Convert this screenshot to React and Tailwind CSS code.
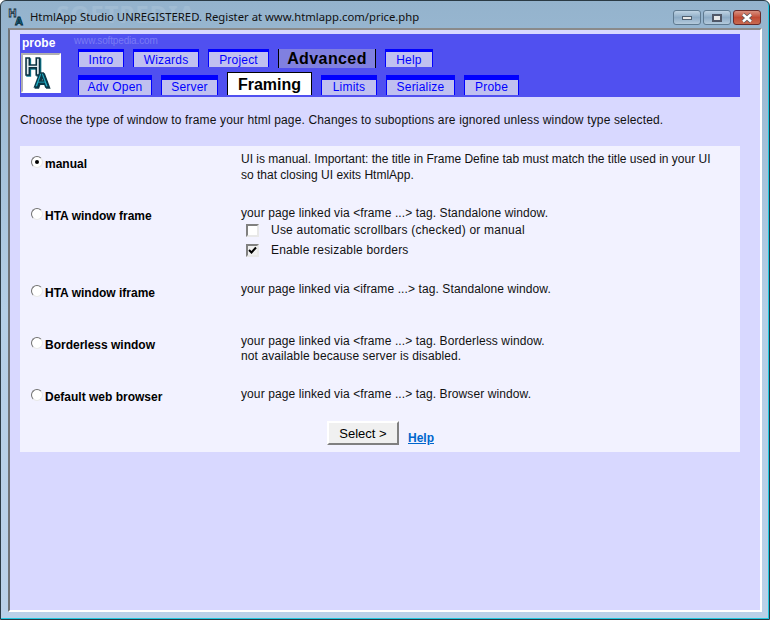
import React from 'react';

const arial = "font-['Liberation_Sans',Arial,sans-serif]";

function Tab({ label, width }) {
    return (
        <div className={`${width} h-[18px] flex items-center justify-center bg-[#c0c0f0] border-x border-t-[3px] border-b-0 border-[#0000ff] text-[12px] leading-none text-[#0000ff] tracking-[0.2px]`}>
            {label}
        </div>
    );
}

function SubTab({ label, width }) {
    return (
        <div className={`${width} h-5 flex items-center justify-center pb-[2px] bg-[#c0c0f0] border-x border-t-[5px] border-b-0 border-[#0000ff] text-[12px] leading-none text-[#0000ff] tracking-[0.2px]`}>
            {label}
        </div>
    );
}

function Radio({ checked }) {
    return (
        <span className="w-3 h-3 flex-shrink-0 rounded-full bg-white border border-t-[#707070] border-l-[#707070] border-r-[#e8e8e8] border-b-[#e8e8e8] flex items-center justify-center">
            {checked && <span className="w-1 h-1 rounded-full bg-black" />}
        </span>
    );
}

function Check({ checked }) {
    return (
        <span className={`w-[13px] h-[13px] flex-shrink-0 border-2 border-t-[#808080] border-l-[#808080] border-r-[#e8e8e8] border-b-[#e8e8e8] flex items-center justify-center ${checked ? 'bg-[#f0f0f0]' : 'bg-white'}`}>
            {checked && (
                <svg width="9" height="9" viewBox="0 0 9 9">
                    <path d="M1 4 L3.5 6.5 L8 1.5" fill="none" stroke="#000" strokeWidth="2" />
                </svg>
            )}
        </span>
    );
}

function OptionRow({ label, checked, height, textClass, children }) {
    return (
        <div className={`flex ${height}`}>
            <div className="w-[221px] flex items-start gap-[2px] pl-[11px] text-[12px] leading-[14px] font-bold text-black">
                <Radio checked={checked} />
                <span className="mt-px">{label}</span>
            </div>
            <div className={`flex-1 pr-4 text-[12px] text-[#111] ${textClass}`}>{children}</div>
        </div>
    );
}

function Logo() {
    return (
        <div className="w-10 h-10 bg-white border-2 border-t-[#b0b0b0] border-l-[#b0b0b0] border-r-white border-b-white">
            <svg width="36" height="36" viewBox="0 0 36 36" className="block">
                <g fontFamily="Liberation Sans" fontWeight="bold">
                    <text x="1.5" y="20" fontSize="23" fill="#e4ecf0" stroke="#0a3040" strokeWidth="1.6" className="[filter:drop-shadow(1.5px_1.5px_0_#0c7a90)]">H</text>
                    <text x="11" y="32" fontSize="21" fill="#20b0c8" stroke="#0a3848" strokeWidth="1.4" className="[filter:drop-shadow(1px_1px_0_#0a3848)]">A</text>
                </g>
            </svg>
        </div>
    );
}

function WinButton({ className, children }) {
    return (
        <div className={`w-7 h-[15px] rounded-[3px] border flex items-center justify-center ${className}`}>
            {children}
        </div>
    );
}

export default function App() {
    return (
        <div className={`${arial} relative w-[770px] h-[620px] overflow-hidden flex flex-col pl-[7px] pr-[7px] pb-[7px] rounded-t-md border border-[#2a3a44] shadow-[inset_-1px_-1px_0_#20c8e0] bg-gradient-to-b from-[#94b3cd] via-[#b4cfe6] to-[#bad1e9]`}>
            {/* Title bar */}
            <div className="h-[27px] flex-shrink-0 flex items-center relative">
                <span className="absolute left-[48px] top-0 font-['Noto_Sans',sans-serif] font-bold text-[24px] leading-[26px] tracking-[1px] text-white/10 whitespace-nowrap">SOFTPEDIA</span>
                <svg width="18" height="20" viewBox="0 0 18 20" className="absolute left-0 top-[6px]">
                    <g fontFamily="Liberation Sans" fontWeight="bold">
                        <text x="0.5" y="10" fontSize="11" fill="#e4ecf0" stroke="#082838" strokeWidth="0.9">H</text>
                        <text x="7" y="18" fontSize="11" fill="#20a0c8" stroke="#082838" strokeWidth="0.9">A</text>
                    </g>
                </svg>
                <span className="relative ml-[22px] mt-[6px] font-['Noto_Sans',sans-serif] text-[11.3px] text-[#101010] whitespace-nowrap">
                    HtmlApp Studio UNREGISTERED. Register at www.htmlapp.com/price.php
                </span>
                <div className="absolute right-px top-[9px] flex gap-[2px]">
                    <WinButton className="border-[#5f7a90] bg-gradient-to-b from-[#c0d4e4] via-[#8eacc6] to-[#b4cadc]">
                        <span className="w-[10px] h-1 bg-[#e8e8e8] border border-[#506070]" />
                    </WinButton>
                    <WinButton className="border-[#5f7a90] bg-gradient-to-b from-[#c0d4e4] via-[#8eacc6] to-[#b4cadc]">
                        <span className="w-[10px] h-2 bg-[#e8e8e8] border-2 border-[#505868]" />
                    </WinButton>
                    <WinButton className="border-[#6a2a28] bg-gradient-to-b from-[#d89080] via-[#c04a34] to-[#c86a50]">
                        <svg width="12" height="10" viewBox="0 0 12 10">
                            <path d="M2 1.5 L10 8.5 M10 1.5 L2 8.5" stroke="#5a5a60" strokeWidth="4" />
                            <path d="M2 1.5 L10 8.5 M10 1.5 L2 8.5" stroke="#fff" strokeWidth="2.4" />
                        </svg>
                    </WinButton>
                </div>
            </div>

            {/* Client area */}
            <div className="flex-1 min-h-0 bg-[#d8d8ff] border-2 border-t-[#8a8a8a] border-l-[#707478] border-r-white border-b-white pt-[4px] px-[10px]">
                <div className="w-[720px] h-[63px] bg-[#5050f0] flex pl-px relative">
                    <div className="w-[57px] flex-shrink-0">
                        <div className="ml-px text-[12px] font-bold text-white leading-[14px] mt-[2px]">probe</div>
                        <div className="mt-[3px]"><Logo /></div>
                    </div>
                    <div className="flex flex-col">
                        <div className="flex items-start gap-[9px] mt-[15px] h-[23px]">
                            <Tab label="Intro" width="w-[46px]" />
                            <Tab label="Wizards" width="w-[66px]" />
                            <Tab label="Project" width="w-[61px]" />
                            <div className="w-[98px] h-[19px] flex items-center justify-center bg-[#8080e0] border-x border-black text-[16px] leading-none font-bold text-black tracking-[0.4px]">
                                Advanced
                            </div>
                            <Tab label="Help" width="w-[48px]" />
                        </div>
                        <div className="flex items-end gap-[9px]">
                            <SubTab label="Adv Open" width="w-[74px]" />
                            <SubTab label="Server" width="w-[57px]" />
                            <div className="w-[85px] h-[23px] flex items-center justify-center pt-px bg-white border-x border-t border-black text-[16px] leading-none font-bold text-black">
                                Framing
                            </div>
                            <SubTab label="Limits" width="w-[56px]" />
                            <SubTab label="Serialize" width="w-[69px]" />
                            <SubTab label="Probe" width="w-[55px]" />
                        </div>
                    </div>
                    {/* softpedia mark */}
                    <span className="absolute left-[54px] top-px text-[10px] leading-[12px] text-[#7a7af5] tracking-[-0.15px]">www.softpedia.com</span>
                </div>

                <p className="mt-[16px] text-[12px] leading-[15px] text-[#111] tracking-[0.15px]">
                    Choose the type of window to frame your html page. Changes to suboptions are ignored unless window type selected.
                </p>

                <div className="mt-[18px] w-[720px] h-[306px] bg-[#f2f2ff] pt-[10px]">
                    <OptionRow label="manual" checked height="h-[52px]" textClass="-mt-[5px] leading-[16px]">
                        <p>UI is manual. Important: the title in Frame Define tab must match the title used in your UI<br />so that closing UI exits HtmlApp.</p>
                    </OptionRow>
                    <OptionRow label="HTA window frame" height="h-[77px]" textClass="-mt-[2px] leading-[15px]">
                        <p className="tracking-[0.1px]">your page linked via &lt;frame ...&gt; tag. Standalone window.</p>
                        <div className="-mt-px ml-[5px] flex items-center gap-3 h-5"><Check /><span className="tracking-[0.22px]">Use automatic scrollbars (checked) or manual</span></div>
                        <div className="ml-[5px] flex items-center gap-3 h-5"><Check checked /><span className="tracking-[0.2px]">Enable resizable borders</span></div>
                    </OptionRow>
                    <OptionRow label="HTA window iframe" height="h-[52px]" textClass="-mt-[3px] leading-[15px]">
                        <p className="tracking-[0.1px]">your page linked via &lt;iframe ...&gt; tag. Standalone window.</p>
                    </OptionRow>
                    <OptionRow label="Borderless window" height="h-[52px]" textClass="-mt-[3px] leading-[15px]">
                        <p className="tracking-[0.1px]">your page linked via &lt;frame ...&gt; tag. Borderless window.<br />not available because server is disabled.</p>
                    </OptionRow>
                    <OptionRow label="Default web browser" height="h-[32px]" textClass="-mt-[2px] leading-[15px]">
                        <p className="tracking-[0.1px]">your page linked via &lt;frame ...&gt; tag. Browser window.</p>
                    </OptionRow>
                    <div className="flex items-end pl-[307px]">
                        <button className="w-[72px] h-6 bg-[#f0f0f0] border-2 border-t-white border-l-white border-r-[#808080] border-b-[#808080] text-[13px] leading-none text-black">
                            Select &gt;
                        </button>
                        <a className="ml-[9px] text-[12px] leading-[14px] font-bold text-[#0066cc] underline" href="#help">Help</a>
                    </div>
                </div>
            </div>
        </div>
    );
}
